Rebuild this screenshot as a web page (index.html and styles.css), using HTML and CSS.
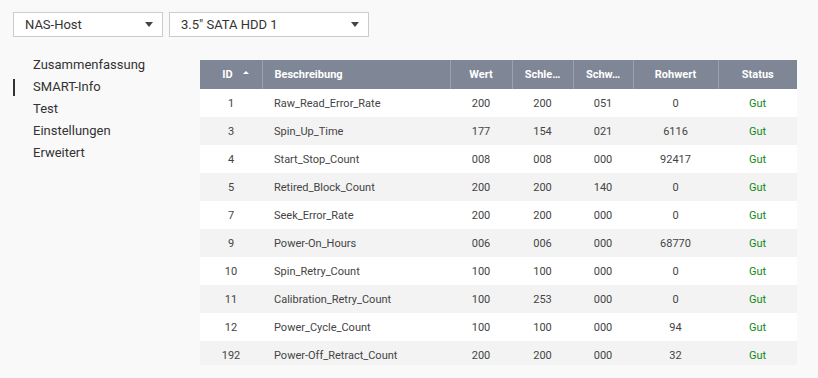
FILE: index.html
```html
<html>
  <head>
    <meta name="viewport" content="width=device-width, initial-scale=1"/>
    <link rel="stylesheet" href="styles.css">
  </head>
  <body>
    <div class="toolbar">
      <div class="select select-host">
        <span>NAS-Host</span>
        <span class="caret"></span>
      </div>
      <div class="select select-disk">
        <span>3.5" SATA HDD 1</span>
        <span class="caret"></span>
      </div>
    </div>

    <div class="main">
      <ul class="side-nav">
        <li>Zusammenfassung</li>
        <li class="active">SMART-Info</li>
        <li>Test</li>
        <li>Einstellungen</li>
        <li>Erweitert</li>
      </ul>

      <div class="grid-wrap">
        <table class="smart-table">
          <colgroup>
            <col style="width: 62px">
            <col style="width: 188px">
            <col style="width: 62px">
            <col style="width: 61px">
            <col style="width: 60px">
            <col style="width: 85px">
            <col style="width: 79px">
          </colgroup>
          <thead>
            <tr>
              <th class="id-head">ID <span class="sort"></span></th>
              <th class="left">Beschreibung</th>
              <th>Wert</th>
              <th>Schle…</th>
              <th>Schw…</th>
              <th>Rohwert</th>
              <th>Status</th>
            </tr>
          </thead>
          <tbody>
            <tr><td>1</td><td class="left">Raw_Read_Error_Rate</td><td>200</td><td>200</td><td>051</td><td>0</td><td class="ok">Gut</td></tr>
            <tr><td>3</td><td class="left">Spin_Up_Time</td><td>177</td><td>154</td><td>021</td><td>6116</td><td class="ok">Gut</td></tr>
            <tr><td>4</td><td class="left">Start_Stop_Count</td><td>008</td><td>008</td><td>000</td><td>92417</td><td class="ok">Gut</td></tr>
            <tr><td>5</td><td class="left">Retired_Block_Count</td><td>200</td><td>200</td><td>140</td><td>0</td><td class="ok">Gut</td></tr>
            <tr><td>7</td><td class="left">Seek_Error_Rate</td><td>200</td><td>200</td><td>000</td><td>0</td><td class="ok">Gut</td></tr>
            <tr><td>9</td><td class="left">Power-On_Hours</td><td>006</td><td>006</td><td>000</td><td>68770</td><td class="ok">Gut</td></tr>
            <tr><td>10</td><td class="left">Spin_Retry_Count</td><td>100</td><td>100</td><td>000</td><td>0</td><td class="ok">Gut</td></tr>
            <tr><td>11</td><td class="left">Calibration_Retry_Count</td><td>100</td><td>253</td><td>000</td><td>0</td><td class="ok">Gut</td></tr>
            <tr><td>12</td><td class="left">Power_Cycle_Count</td><td>100</td><td>100</td><td>000</td><td>94</td><td class="ok">Gut</td></tr>
            <tr><td>192</td><td class="left">Power-Off_Retract_Count</td><td>200</td><td>200</td><td>000</td><td>32</td><td class="ok">Gut</td></tr>
          </tbody>
        </table>
      </div>
    </div>
  </body>
</html>
```

FILE: styles.css
```css
html, body {
  margin: 0;
  background-color: #f9f9f9;
}

body {
  font-family: Roboto, "Liberation Sans", sans-serif;
  color: #333;
  width: 818px;
  height: 378px;
  overflow: hidden;
}

.toolbar {
  display: flex;
  gap: 6px;
  padding: 12px 0 0 13px;
}

.select {
  display: flex;
  align-items: center;
  justify-content: space-between;
  box-sizing: border-box;
  height: 25px;
  padding: 0 9px 0 11px;
  background-color: #fff;
  border: 1px solid #ccc;
  font-size: 13px;
  color: #333;
}

.select-host {
  width: 150px;
}

.select-disk {
  width: 200px;
}

.caret {
  width: 0;
  height: 0;
  border-left: 4px solid transparent;
  border-right: 4px solid transparent;
  border-top: 5px solid #444;
}

.main {
  display: flex;
  padding-top: 17px;
}

.side-nav {
  list-style: none;
  margin: 0;
  padding: 0;
  width: 200px;
}

.side-nav li {
  height: 22px;
  line-height: 22px;
  padding-left: 33px;
  font-size: 13px;
  color: #333;
}

/* active item: short dark bar on the left */
.side-nav li.active {
  background-image: linear-gradient(#333, #333);
  background-size: 2px 17px;
  background-position: 13px center;
  background-repeat: no-repeat;
}

.grid-wrap {
  margin-top: 6px;
  width: 597px;
  height: 305px;
  overflow: hidden;
}

.smart-table {
  table-layout: fixed;
  border-collapse: collapse;
  width: 597px;
  font-size: 11px;
}

.smart-table th {
  height: 29px;
  padding: 0 6px;
  background-color: #7f8696;
  color: #fff;
  font-weight: 700;
  text-align: center;
  white-space: nowrap;
  border-left: 1px solid #9ba1ae;
}

.smart-table th:first-child {
  border-left: none;
}

.smart-table th.id-head {
  padding-left: 16px;
}

.smart-table th.left {
  padding-left: 12px;
}

.smart-table td {
  height: 28px;
  padding: 0 12px;
  text-align: center;
  color: #444;
  white-space: nowrap;
}

.smart-table .left {
  text-align: left;
}

.smart-table tbody tr:nth-child(odd) {
  background-color: #fff;
}

.smart-table tbody tr:nth-child(even) {
  background-color: #f3f3f3;
}

.smart-table td.ok {
  color: #0f8a0f;
}

.sort {
  display: inline-block;
  vertical-align: 4px;
  margin-left: 8px;
  width: 0;
  height: 0;
  border-left: 3px solid transparent;
  border-right: 3px solid transparent;
  border-bottom: 3px solid #fff;
}
```
